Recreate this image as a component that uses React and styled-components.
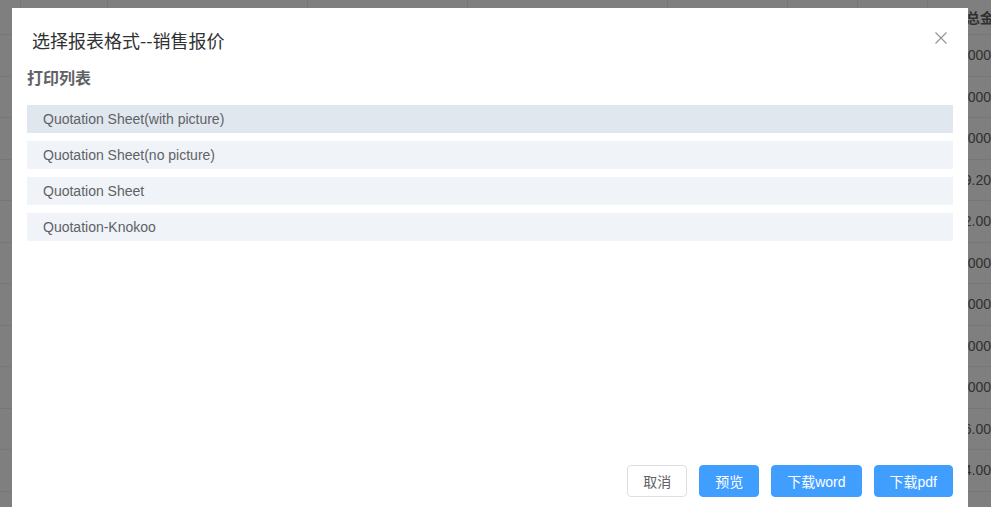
import React from 'react'
import styled, { createGlobalStyle } from 'styled-components'

const GlobalStyle = createGlobalStyle`
  html, body {
    margin: 0;
    padding: 0;
    height: 100%;
    overflow: hidden;
    background: #fff;
    font-family: "Liberation Sans", "Noto Sans CJK SC", sans-serif;
  }
`

const Page = styled.div`
  position: relative;
  width: 991px;
  height: 507px;
  overflow: hidden;
`

const Table = styled.div`
  display: grid;
  grid-template-columns: 8px 100px 200px 160px 200px 120px 70px 70px 74px;
  color: #606266;
  font-size: 14px;
`

const Cell = styled.div`
  height: ${p => (p.$head ? 35 : 41.5)}px;
  box-sizing: border-box;
  border-bottom: 1px solid #ebeef5;
  border-right: 1px solid #ebeef5;
  padding: 0 10px;
  display: flex;
  align-items: center;
  justify-content: ${p => (p.$right ? 'flex-end' : 'flex-start')};
  white-space: nowrap;
  overflow: hidden;
  font-weight: ${p => (p.$head ? 700 : 400)};
`

const Overlay = styled.div`
  position: absolute;
  inset: 0;
  background: rgba(0, 0, 0, 0.5);
`

const Dialog = styled.div`
  position: absolute;
  top: 8px;
  left: 12px;
  width: 956px;
  height: 509px;
  background: #fff;
  display: flex;
  flex-direction: column;
`

const Header = styled.div`
  position: relative;
  padding: 20px 20px 10px;
`

const Title = styled.span`
  display: block;
  font-size: 18px;
  line-height: 24px;
  color: #303133;
  font-family: "Noto Sans CJK SC", "Liberation Sans", sans-serif;
  font-weight: 400;
`

const Close = styled.button`
  position: absolute;
  top: 23px;
  right: 20px;
  width: 14px;
  height: 14px;
  padding: 0;
  border: 0;
  background: none;
  display: flex;
  align-items: center;
  justify-content: center;
`

const Body = styled.div`
  flex: 1;
  padding: 3px 15px 0;
  display: flex;
  flex-direction: column;
`

const Label = styled.div`
  font-size: 16px;
  line-height: 24px;
  font-weight: 700;
  color: #606266;
  font-family: "Noto Sans CJK SC", "Liberation Sans", sans-serif;
  margin-bottom: 16px;
`

const List = styled.div`
  display: flex;
  flex-direction: column;
  gap: 8px;
`

const Item = styled.div`
  height: 28px;
  line-height: 28px;
  padding-left: 16px;
  font-size: 14px;
  color: #606266;
  background: ${p => (p.$active ? '#e1e7ef' : '#f0f3f8')};
`

const Footer = styled.div`
  display: flex;
  justify-content: flex-end;
  gap: 12px;
  padding: 0 15px 20px;
`

const Button = styled.button`
  height: 32px;
  box-sizing: border-box;
  padding: 0 15px;
  border-radius: 4px;
  font-size: 14px;
  font-family: "Liberation Sans", "Noto Sans CJK SC", sans-serif;
  border: 1px solid ${p => (p.$primary ? '#409eff' : '#dcdfe6')};
  background: ${p => (p.$primary ? '#409eff' : '#fff')};
  color: ${p => (p.$primary ? '#fff' : '#606266')};
  white-space: nowrap;
`

const lastCol = ['12000.000', '12000.000', '12000.000', '1359.20', '1352.00', '12000.000', '12000.000', '12000.000', '12000.000', '1356.00', '1354.00', '12000.000']

const App = () => {
  const items = ['Quotation Sheet(with picture)', 'Quotation Sheet(no picture)', 'Quotation Sheet', 'Quotation-Knokoo']
  return (
    <Page>
      <GlobalStyle />
      <Table>
        {[...Array(9)].map((_, i) => (
          <Cell key={'h' + i} $head>{i === 8 ? '合计总金额' : ''}</Cell>
        ))}
        {lastCol.map((v, r) =>
          [...Array(9)].map((_, i) => (
            <Cell key={r + '-' + i} $right={i === 8}>{i === 8 ? v : ''}</Cell>
          ))
        )}
      </Table>
      <Overlay />
      <Dialog>
        <Header>
          <Title>选择报表格式--销售报价</Title>
          <Close aria-label="close">
            <svg width="12" height="12" viewBox="0 0 12 12">
              <path d="M0.5 0.5 L11.5 11.5 M11.5 0.5 L0.5 11.5" stroke="#909399" strokeWidth="1.1" fill="none" />
            </svg>
          </Close>
        </Header>
        <Body>
          <Label>打印列表</Label>
          <List>
            {items.map((t, i) => (
              <Item key={t} $active={i === 0}>{t}</Item>
            ))}
          </List>
        </Body>
        <Footer>
          <Button>取消</Button>
          <Button $primary>预览</Button>
          <Button $primary>下载word</Button>
          <Button $primary>下载pdf</Button>
        </Footer>
      </Dialog>
    </Page>
  )
}

export default App
